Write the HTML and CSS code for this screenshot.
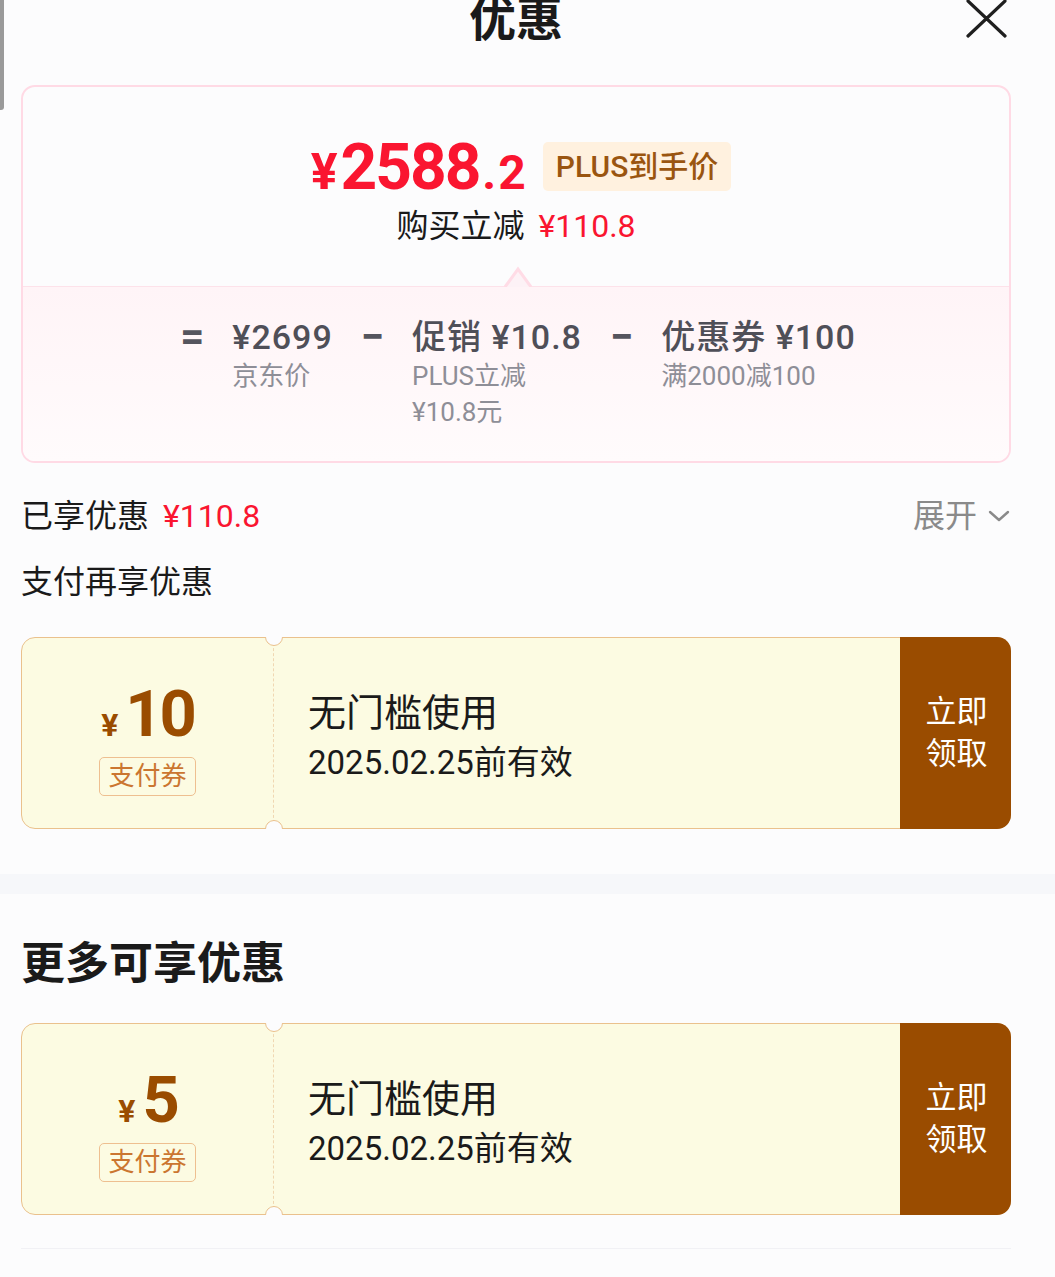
FILE: index.html
```html
<!DOCTYPE html>
<html lang="zh-CN">
  <head>
    <meta charset="UTF-8" />
    <meta name="viewport" content="width=device-width, initial-scale=1.0" />
    <title>优惠</title>
    <link rel="stylesheet" href="styles.css">
  </head>
  <body>
    <div class="scroll-thumb"></div>

    <div class="sheet-header">
      <span></span>
      <h1 class="sheet-title">优惠</h1>
      <button class="close-btn" aria-label="关闭">
        <svg width="44" height="40" viewBox="0 0 44 40">
          <path d="M3 1 L40 36 M40 1 L3 36" stroke="#1f1f1f" stroke-width="3.2" fill="none" stroke-linecap="round" />
        </svg>
      </button>
    </div>

    <div class="content">
      <!-- price summary -->
      <div class="price-card">
        <div class="price-top">
          <div class="price-row">
            <span class="final-price"><span class="cur">¥</span>2588<span class="dec">.2</span></span>
            <span class="plus-tag">PLUS到手价</span>
          </div>
          <div class="reduce-line">购买立减<span class="red">¥110.8</span></div>
          <svg class="pointer" width="30" height="22" viewBox="0 0 30 22">
            <path d="M2 22 L15 4 L28 22" fill="#fdf2f6" stroke="#ffdce6" stroke-width="3" />
          </svg>
        </div>
        <div class="breakdown">
          <span class="op">=</span>
          <div class="part">
            <div class="part-val">¥2699</div>
            <div class="part-sub">京东价</div>
          </div>
          <span class="op">−</span>
          <div class="part">
            <div class="part-val">促销 ¥10.8</div>
            <div class="part-sub">PLUS立减<br>¥10.8元</div>
          </div>
          <span class="op">−</span>
          <div class="part">
            <div class="part-val">优惠券 ¥100</div>
            <div class="part-sub">满2000减100</div>
          </div>
        </div>
      </div>

      <div class="enjoyed-row">
        <div>已享优惠<span class="red">¥110.8</span></div>
        <div class="expand">展开
          <svg width="24" height="14" viewBox="0 0 24 14">
            <path d="M3 3 L12 11 L21 3" stroke="#8a8a8a" stroke-width="2.4" fill="none" stroke-linecap="round" stroke-linejoin="round" />
          </svg>
        </div>
      </div>

      <div class="sub-title">支付再享优惠</div>

      <div class="coupon">
        <div class="coupon-left">
          <div class="amount"><span class="amount-cur">¥</span>10</div>
          <div class="coupon-tag">支付券</div>
        </div>
        <div class="coupon-mid">
          <div class="coupon-name">无门槛使用</div>
          <div class="coupon-date">2025.02.25前有效</div>
        </div>
        <div class="coupon-btn">立即<br>领取</div>
      </div>
    </div>

    <div class="band"></div>

    <div class="content">
      <h2 class="section-title">更多可享优惠</h2>

      <div class="coupon">
        <div class="coupon-left">
          <div class="amount"><span class="amount-cur">¥</span>5</div>
          <div class="coupon-tag">支付券</div>
        </div>
        <div class="coupon-mid">
          <div class="coupon-name">无门槛使用</div>
          <div class="coupon-date">2025.02.25前有效</div>
        </div>
        <div class="coupon-btn">立即<br>领取</div>
      </div>

      <div class="end-line"></div>
    </div>
  </body>
</html>
```

FILE: styles.css
```css
body {
  margin: 0;
  padding: 0;
  font-family: 'Roboto', 'Noto Sans CJK SC', sans-serif;
  background-color: #fcfcfd;
  color: #1a1a1a;
  overflow: hidden;
}
.scroll-thumb {
  position: absolute;
  left: 0;
  top: 0;
  width: 4px;
  height: 110px;
  background-color: #9a9a9a;
  border-radius: 0 0 3px 0;
}
.sheet-header {
  display: grid;
  grid-template-columns: 1fr auto 1fr;
  height: 85px;
  padding: 0 44px 0 21px;
}
.sheet-title {
  margin: -12px 0 0;
  font-size: 47px;
  line-height: 56px;
  font-weight: 700;
  font-family: 'Noto Sans CJK SC', sans-serif;
  color: #1a1a1a;
}
.close-btn {
  justify-self: end;
  align-self: start;
  margin: 0 2px 0 0;
  padding: 0;
  border: none;
  background: none;
  height: 40px;
}
.content {
  padding: 0 44px 0 21px;
}
.red {
  color: #fa1530;
  margin-left: 14px;
}

/* price card */
.price-card {
  border: 2px solid #ffdae5;
  border-radius: 14px;
  overflow: hidden;
}
.price-top {
  position: relative;
  padding: 46px 0 42px;
  text-align: center;
}
.price-row {
  display: flex;
  justify-content: center;
  align-items: center;
  gap: 15px;
  height: 70px;
  padding-left: 10px;
}
.final-price {
  color: #fa1530;
  font-weight: 700;
  font-size: 64px;
  letter-spacing: -2px;
  line-height: 70px;
}
.final-price .cur {
  font-size: 50px;
  letter-spacing: 0;
  margin-right: 3px;
  line-height: 0;
}
.final-price .dec {
  font-size: 48px;
  letter-spacing: 2px;
  margin-left: 3px;
  line-height: 0;
}
.plus-tag {
  background-color: #fff1df;
  color: #9a5510;
  font-size: 30px;
  font-weight: 500;
  line-height: 49px;
  padding: 0 13px;
  border-radius: 5px;
  margin-top: -4px;
}
.reduce-line {
  margin-top: 5px;
  font-size: 32px;
  line-height: 36px;
  color: #1a1a1a;
}
.pointer {
  position: absolute;
  left: 480px;
  bottom: -1px;
}
.breakdown {
  display: flex;
  justify-content: center;
  align-items: flex-start;
  gap: 28px;
  padding: 29px 0 31px 4px;
  border-top: 1px solid #fde2ea;
  background: linear-gradient(#fff4f7, #fffbfc);
}
.op {
  font-size: 42px;
  font-weight: 700;
  line-height: 42px;
  color: #55555e;
}
.part-val {
  font-size: 34px;
  font-weight: 500;
  letter-spacing: 1px;
  line-height: 42px;
  color: #4f4f58;
}
.part-sub {
  font-size: 26px;
  line-height: 36px;
  color: #8e8e97;
}

/* rows */
.enjoyed-row {
  display: flex;
  justify-content: space-between;
  align-items: center;
  margin-top: 31px;
  font-size: 32px;
  line-height: 44px;
}
.expand {
  display: flex;
  align-items: center;
  gap: 10px;
  color: #8a8a8a;
}
.sub-title {
  margin-top: 22px;
  font-size: 32px;
  line-height: 44px;
}
.section-title {
  margin: 36px 0 0;
  font-size: 44px;
  font-weight: 700;
  line-height: 60px;
  font-family: 'Noto Sans CJK SC', sans-serif;
}

/* coupon */
.coupon {
  display: grid;
  grid-template-columns: 252px 1fr 110px;
  height: 190px;
  margin-top: 33px;
  background-color: #fcfbe2;
  border: 1px solid #eac18d;
  border-radius: 14px;
}
.coupon-left {
  position: relative;
  display: flex;
  flex-direction: column;
  align-items: center;
  padding-top: 40px;
  border-right: 1.5px dashed #f0d7b2;
}
.coupon-left::before,
.coupon-left::after {
  content: "";
  position: absolute;
  right: -10px;
  width: 16px;
  height: 16px;
  border: 1px solid #eac18d;
  border-radius: 50%;
  background-color: #fcfcfd;
}
.coupon-left::before {
  top: -10px;
  clip-path: inset(9px 0 0 0);
}
.coupon-left::after {
  bottom: -10px;
  clip-path: inset(0 0 9px 0);
}
.amount {
  color: #9a4c00;
  font-size: 65px;
  font-weight: 700;
  letter-spacing: -3px;
  line-height: 72px;
}
.amount-cur {
  font-size: 32px;
  letter-spacing: 0;
  margin-right: 7px;
  line-height: 0;
}
.coupon-tag {
  margin-top: 7px;
  border: 1px solid #eebf90;
  border-radius: 5px;
  color: #cb7630;
  font-size: 26px;
  line-height: 37px;
  padding: 0 8px;
}
.coupon-mid {
  display: flex;
  flex-direction: column;
  justify-content: center;
  padding: 10px 0 0 34px;
}
.coupon-name {
  font-size: 38px;
  line-height: 50px;
  color: #1a1a1a;
}
.coupon-date {
  font-size: 33px;
  line-height: 50px;
  color: #1a1a1a;
}
.coupon-btn {
  display: flex;
  align-items: center;
  justify-content: center;
  margin: -1px -1px -1px 0;
  background-color: #9a4c00;
  color: #fff;
  font-size: 31px;
  line-height: 42px;
  border-radius: 0 14px 14px 0;
  padding-left: 2px;
}
.band {
  height: 20px;
  margin-top: 45px;
  background-color: #f6f7fa;
}
.end-line {
  margin-top: 33px;
  height: 1px;
  background-color: #f1f1f5;
}
```
